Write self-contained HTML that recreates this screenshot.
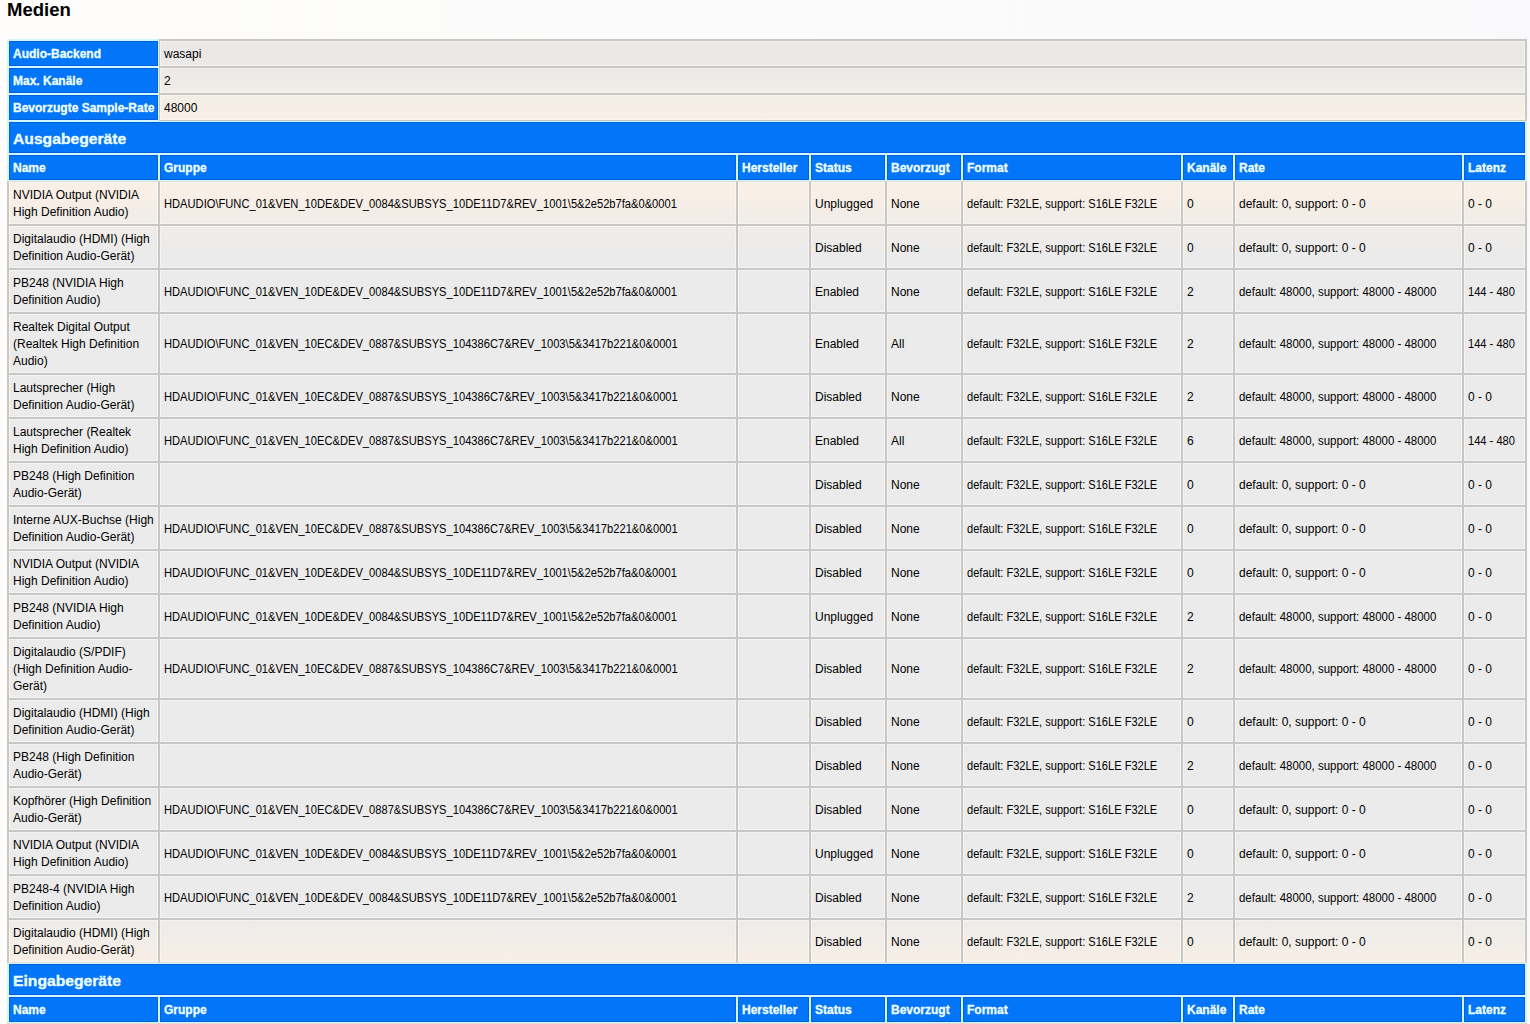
<!DOCTYPE html>
<html><head><meta charset="utf-8"><title>Medien</title>
<style>
html,body{margin:0;padding:0;}
body{width:1530px;height:1024px;overflow:hidden;position:relative;
 background:linear-gradient(to right,#fefdfb,#f9f9fb);
 font-family:"Liberation Sans",sans-serif;color:#000;}
h1{position:absolute;left:7px;top:0;margin:0;font-size:18px;line-height:20px;font-weight:bold;color:#000;}
table{position:absolute;left:7px;top:39px;border-collapse:separate;border-spacing:0;table-layout:fixed;width:1520px;
 background:linear-gradient(to bottom,#ebe9e7 2px,#ebe9e7 27px,#f0ece7 51px,#f7efe6 71px,#f8efe6 81px,#f8efe6 156px,#f0ece8 185px,#ebebeb 216px,#ebebeb 876px,#f8efe6 923px,#ebebeb 927px);
}
td,th{padding:4px 4px 4px 4px;border:1px solid #c9c7c4;font-size:12px;line-height:17px;text-align:left;vertical-align:middle;white-space:nowrap;overflow:hidden;font-weight:normal;}
th{background:#0375f8;box-shadow:inset 0 0 0 1px rgba(0,50,150,0.28);border-color:#d2f6ff;color:#efffff;font-weight:bold;-webkit-text-stroke:0.3px #efffff;}
td{box-shadow:inset 0 0 0 1px rgba(255,255,255,0.45);}
tr.fd > td{border-top-color:#e2ddd8;}
tr.ld > td{border-bottom-color:#e2ddd8;}
tr > :first-child{border-left-width:2px;}
tr > :last-child{border-right-width:2px;}
tr.first > *{border-top-width:2px;}
th.sec{font-size:15px;line-height:23px;}
.t{display:inline-block;transform-origin:0 50%;position:relative;top:1px;}
.n{position:relative;top:1px;}
</style></head><body>
<h1><span class="t" style="transform:scaleX(1.03);top:0">Medien</span></h1>
<table>
<colgroup>
<col style="width:152px">
<col style="width:578px">
<col style="width:73px">
<col style="width:76px">
<col style="width:76px">
<col style="width:220px">
<col style="width:52px">
<col style="width:229px">
<col style="width:64px">
</colgroup>
<tr class="first"><th><span class="n">Audio-Backend</span></th><td colspan="8"><span class="n">wasapi</span></td></tr>
<tr><th><span class="n">Max. Kanäle</span></th><td colspan="8"><span class="n">2</span></td></tr>
<tr><th><span class="n">Bevorzugte Sample-Rate</span></th><td colspan="8"><span class="n">48000</span></td></tr>
<tr><th class="sec" colspan="9"><span class="t" style="transform:scaleX(1.045)">Ausgabegeräte</span></th></tr>
<tr><th><span class="n">Name</span></th><th><span class="n">Gruppe</span></th><th><span class="n">Hersteller</span></th><th><span class="n">Status</span></th><th><span class="n">Bevorzugt</span></th><th><span class="n">Format</span></th><th><span class="n">Kanäle</span></th><th><span class="n">Rate</span></th><th><span class="n">Latenz</span></th></tr>
<tr class="fd">
<td><span class="n">NVIDIA Output (NVIDIA<br>High Definition Audio)</span></td><td><span class="t" style="transform:scaleX(0.929)">HDAUDIO\FUNC_01&amp;VEN_10DE&amp;DEV_0084&amp;SUBSYS_10DE11D7&amp;REV_1001\5&amp;2e52b7fa&amp;0&amp;0001</span></td><td></td><td><span class="n">Unplugged</span></td><td><span class="n">None</span></td><td><span class="t" style="transform:scaleX(0.923)">default: F32LE, support: S16LE F32LE</span></td><td><span class="n">0</span></td><td><span class="n">default: 0, support: 0 - 0</span></td><td><span class="n">0 - 0</span></td></tr>
<tr class="">
<td><span class="n">Digitalaudio (HDMI) (High<br>Definition Audio-Gerät)</span></td><td></td><td></td><td><span class="n">Disabled</span></td><td><span class="n">None</span></td><td><span class="t" style="transform:scaleX(0.923)">default: F32LE, support: S16LE F32LE</span></td><td><span class="n">0</span></td><td><span class="n">default: 0, support: 0 - 0</span></td><td><span class="n">0 - 0</span></td></tr>
<tr class="">
<td><span class="n">PB248 (NVIDIA High<br>Definition Audio)</span></td><td><span class="t" style="transform:scaleX(0.929)">HDAUDIO\FUNC_01&amp;VEN_10DE&amp;DEV_0084&amp;SUBSYS_10DE11D7&amp;REV_1001\5&amp;2e52b7fa&amp;0&amp;0001</span></td><td></td><td><span class="n">Enabled</span></td><td><span class="n">None</span></td><td><span class="t" style="transform:scaleX(0.923)">default: F32LE, support: S16LE F32LE</span></td><td><span class="n">2</span></td><td><span class="t" style="transform:scaleX(0.954)">default: 48000, support: 48000 - 48000</span></td><td><span class="t" style="transform:scaleX(0.925)">144 - 480</span></td></tr>
<tr class="">
<td><span class="n">Realtek Digital Output<br>(Realtek High Definition<br>Audio)</span></td><td><span class="t" style="transform:scaleX(0.929)">HDAUDIO\FUNC_01&amp;VEN_10EC&amp;DEV_0887&amp;SUBSYS_104386C7&amp;REV_1003\5&amp;3417b221&amp;0&amp;0001</span></td><td></td><td><span class="n">Enabled</span></td><td><span class="n">All</span></td><td><span class="t" style="transform:scaleX(0.923)">default: F32LE, support: S16LE F32LE</span></td><td><span class="n">2</span></td><td><span class="t" style="transform:scaleX(0.954)">default: 48000, support: 48000 - 48000</span></td><td><span class="t" style="transform:scaleX(0.925)">144 - 480</span></td></tr>
<tr class="">
<td><span class="n">Lautsprecher (High<br>Definition Audio-Gerät)</span></td><td><span class="t" style="transform:scaleX(0.929)">HDAUDIO\FUNC_01&amp;VEN_10EC&amp;DEV_0887&amp;SUBSYS_104386C7&amp;REV_1003\5&amp;3417b221&amp;0&amp;0001</span></td><td></td><td><span class="n">Disabled</span></td><td><span class="n">None</span></td><td><span class="t" style="transform:scaleX(0.923)">default: F32LE, support: S16LE F32LE</span></td><td><span class="n">2</span></td><td><span class="t" style="transform:scaleX(0.954)">default: 48000, support: 48000 - 48000</span></td><td><span class="n">0 - 0</span></td></tr>
<tr class="">
<td><span class="n">Lautsprecher (Realtek<br>High Definition Audio)</span></td><td><span class="t" style="transform:scaleX(0.929)">HDAUDIO\FUNC_01&amp;VEN_10EC&amp;DEV_0887&amp;SUBSYS_104386C7&amp;REV_1003\5&amp;3417b221&amp;0&amp;0001</span></td><td></td><td><span class="n">Enabled</span></td><td><span class="n">All</span></td><td><span class="t" style="transform:scaleX(0.923)">default: F32LE, support: S16LE F32LE</span></td><td><span class="n">6</span></td><td><span class="t" style="transform:scaleX(0.954)">default: 48000, support: 48000 - 48000</span></td><td><span class="t" style="transform:scaleX(0.925)">144 - 480</span></td></tr>
<tr class="">
<td><span class="n">PB248 (High Definition<br>Audio-Gerät)</span></td><td></td><td></td><td><span class="n">Disabled</span></td><td><span class="n">None</span></td><td><span class="t" style="transform:scaleX(0.923)">default: F32LE, support: S16LE F32LE</span></td><td><span class="n">0</span></td><td><span class="n">default: 0, support: 0 - 0</span></td><td><span class="n">0 - 0</span></td></tr>
<tr class="">
<td><span class="n">Interne AUX-Buchse (High<br>Definition Audio-Gerät)</span></td><td><span class="t" style="transform:scaleX(0.929)">HDAUDIO\FUNC_01&amp;VEN_10EC&amp;DEV_0887&amp;SUBSYS_104386C7&amp;REV_1003\5&amp;3417b221&amp;0&amp;0001</span></td><td></td><td><span class="n">Disabled</span></td><td><span class="n">None</span></td><td><span class="t" style="transform:scaleX(0.923)">default: F32LE, support: S16LE F32LE</span></td><td><span class="n">0</span></td><td><span class="n">default: 0, support: 0 - 0</span></td><td><span class="n">0 - 0</span></td></tr>
<tr class="">
<td><span class="n">NVIDIA Output (NVIDIA<br>High Definition Audio)</span></td><td><span class="t" style="transform:scaleX(0.929)">HDAUDIO\FUNC_01&amp;VEN_10DE&amp;DEV_0084&amp;SUBSYS_10DE11D7&amp;REV_1001\5&amp;2e52b7fa&amp;0&amp;0001</span></td><td></td><td><span class="n">Disabled</span></td><td><span class="n">None</span></td><td><span class="t" style="transform:scaleX(0.923)">default: F32LE, support: S16LE F32LE</span></td><td><span class="n">0</span></td><td><span class="n">default: 0, support: 0 - 0</span></td><td><span class="n">0 - 0</span></td></tr>
<tr class="">
<td><span class="n">PB248 (NVIDIA High<br>Definition Audio)</span></td><td><span class="t" style="transform:scaleX(0.929)">HDAUDIO\FUNC_01&amp;VEN_10DE&amp;DEV_0084&amp;SUBSYS_10DE11D7&amp;REV_1001\5&amp;2e52b7fa&amp;0&amp;0001</span></td><td></td><td><span class="n">Unplugged</span></td><td><span class="n">None</span></td><td><span class="t" style="transform:scaleX(0.923)">default: F32LE, support: S16LE F32LE</span></td><td><span class="n">2</span></td><td><span class="t" style="transform:scaleX(0.954)">default: 48000, support: 48000 - 48000</span></td><td><span class="n">0 - 0</span></td></tr>
<tr class="">
<td><span class="n">Digitalaudio (S/PDIF)<br>(High Definition Audio-<br>Gerät)</span></td><td><span class="t" style="transform:scaleX(0.929)">HDAUDIO\FUNC_01&amp;VEN_10EC&amp;DEV_0887&amp;SUBSYS_104386C7&amp;REV_1003\5&amp;3417b221&amp;0&amp;0001</span></td><td></td><td><span class="n">Disabled</span></td><td><span class="n">None</span></td><td><span class="t" style="transform:scaleX(0.923)">default: F32LE, support: S16LE F32LE</span></td><td><span class="n">2</span></td><td><span class="t" style="transform:scaleX(0.954)">default: 48000, support: 48000 - 48000</span></td><td><span class="n">0 - 0</span></td></tr>
<tr class="">
<td><span class="n">Digitalaudio (HDMI) (High<br>Definition Audio-Gerät)</span></td><td></td><td></td><td><span class="n">Disabled</span></td><td><span class="n">None</span></td><td><span class="t" style="transform:scaleX(0.923)">default: F32LE, support: S16LE F32LE</span></td><td><span class="n">0</span></td><td><span class="n">default: 0, support: 0 - 0</span></td><td><span class="n">0 - 0</span></td></tr>
<tr class="">
<td><span class="n">PB248 (High Definition<br>Audio-Gerät)</span></td><td></td><td></td><td><span class="n">Disabled</span></td><td><span class="n">None</span></td><td><span class="t" style="transform:scaleX(0.923)">default: F32LE, support: S16LE F32LE</span></td><td><span class="n">2</span></td><td><span class="t" style="transform:scaleX(0.954)">default: 48000, support: 48000 - 48000</span></td><td><span class="n">0 - 0</span></td></tr>
<tr class="">
<td><span class="n">Kopfhörer (High Definition<br>Audio-Gerät)</span></td><td><span class="t" style="transform:scaleX(0.929)">HDAUDIO\FUNC_01&amp;VEN_10EC&amp;DEV_0887&amp;SUBSYS_104386C7&amp;REV_1003\5&amp;3417b221&amp;0&amp;0001</span></td><td></td><td><span class="n">Disabled</span></td><td><span class="n">None</span></td><td><span class="t" style="transform:scaleX(0.923)">default: F32LE, support: S16LE F32LE</span></td><td><span class="n">0</span></td><td><span class="n">default: 0, support: 0 - 0</span></td><td><span class="n">0 - 0</span></td></tr>
<tr class="">
<td><span class="n">NVIDIA Output (NVIDIA<br>High Definition Audio)</span></td><td><span class="t" style="transform:scaleX(0.929)">HDAUDIO\FUNC_01&amp;VEN_10DE&amp;DEV_0084&amp;SUBSYS_10DE11D7&amp;REV_1001\5&amp;2e52b7fa&amp;0&amp;0001</span></td><td></td><td><span class="n">Unplugged</span></td><td><span class="n">None</span></td><td><span class="t" style="transform:scaleX(0.923)">default: F32LE, support: S16LE F32LE</span></td><td><span class="n">0</span></td><td><span class="n">default: 0, support: 0 - 0</span></td><td><span class="n">0 - 0</span></td></tr>
<tr class="">
<td><span class="n">PB248-4 (NVIDIA High<br>Definition Audio)</span></td><td><span class="t" style="transform:scaleX(0.929)">HDAUDIO\FUNC_01&amp;VEN_10DE&amp;DEV_0084&amp;SUBSYS_10DE11D7&amp;REV_1001\5&amp;2e52b7fa&amp;0&amp;0001</span></td><td></td><td><span class="n">Disabled</span></td><td><span class="n">None</span></td><td><span class="t" style="transform:scaleX(0.923)">default: F32LE, support: S16LE F32LE</span></td><td><span class="n">2</span></td><td><span class="t" style="transform:scaleX(0.954)">default: 48000, support: 48000 - 48000</span></td><td><span class="n">0 - 0</span></td></tr>
<tr class="ld">
<td><span class="n">Digitalaudio (HDMI) (High<br>Definition Audio-Gerät)</span></td><td></td><td></td><td><span class="n">Disabled</span></td><td><span class="n">None</span></td><td><span class="t" style="transform:scaleX(0.923)">default: F32LE, support: S16LE F32LE</span></td><td><span class="n">0</span></td><td><span class="n">default: 0, support: 0 - 0</span></td><td><span class="n">0 - 0</span></td></tr>
<tr><th class="sec" colspan="9"><span class="t" style="transform:scaleX(1.045)">Eingabegeräte</span></th></tr>
<tr><th><span class="n">Name</span></th><th><span class="n">Gruppe</span></th><th><span class="n">Hersteller</span></th><th><span class="n">Status</span></th><th><span class="n">Bevorzugt</span></th><th><span class="n">Format</span></th><th><span class="n">Kanäle</span></th><th><span class="n">Rate</span></th><th><span class="n">Latenz</span></th></tr>
<tr class="fd ld">
<td><span class="n">Mikrofon (High<br>Definition Audio-Gerät)</span></td><td><span class="t" style="transform:scaleX(0.929)">HDAUDIO\FUNC_01&amp;VEN_10EC&amp;DEV_0887&amp;SUBSYS_104386C7&amp;REV_1003\5&amp;3417b221&amp;0&amp;0001</span></td><td></td><td><span class="n">Enabled</span></td><td><span class="n">All</span></td><td><span class="t" style="transform:scaleX(0.923)">default: F32LE, support: S16LE F32LE</span></td><td><span class="n">2</span></td><td><span class="t" style="transform:scaleX(0.954)">default: 48000, support: 48000 - 48000</span></td><td><span class="n">0 - 0</span></td></tr>
</table>
</body></html>
